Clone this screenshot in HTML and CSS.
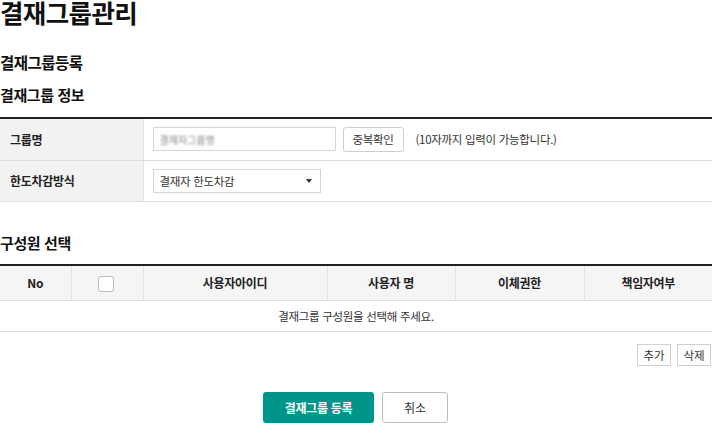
FILE: index.html
```html
<!DOCTYPE html>
<html lang="ko">
<head>
<meta charset="utf-8">
<link rel="stylesheet" href="styles.css">
</head>
<body>
<div class="page">
  <h1 class="title">결재그룹관리</h1>
  <h2 class="sub">결재그룹등록</h2>
  <h3 class="sec sec-info">결재그룹 정보</h3>
  <table class="form">
    <colgroup><col class="c-label"><col></colgroup>
    <tr class="r1">
      <th>그룹명</th>
      <td>
        <div class="field">
          <div class="input"><span class="blur">결재자그룹명</span></div>
          <button class="btn-sm">중복확인</button>
          <span class="hint">(10자까지 입력이 가능합니다.)</span>
        </div>
      </td>
    </tr>
    <tr class="r2">
      <th>한도차감방식</th>
      <td>
        <div class="select"><span>결재자 한도차감</span><span class="caret"></span></div>
      </td>
    </tr>
  </table>
  <h3 class="sec sec-mem">구성원 선택</h3>
  <table class="list">
    <colgroup>
      <col style="width:71px"><col style="width:72px"><col style="width:184px"><col style="width:128px"><col style="width:129px"><col>
    </colgroup>
    <thead>
      <tr>
        <th>No</th>
        <th><span class="chk"></span></th>
        <th>사용자아이디</th>
        <th>사용자 명</th>
        <th>이체권한</th>
        <th>책임자여부</th>
      </tr>
    </thead>
    <tbody>
      <tr><td colspan="6" class="empty">결재그룹 구성원을 선택해 주세요.</td></tr>
    </tbody>
  </table>
  <div class="tools">
    <button class="btn-xs">추가</button>
    <button class="btn-xs">삭제</button>
  </div>
  <div class="actions">
    <button class="btn-primary">결재그룹 등록</button>
    <button class="btn-cancel">취소</button>
  </div>
</div>
</body>
</html>
```
FILE: styles.css
```css
* { box-sizing: border-box; }
html, body { margin: 0; padding: 0; background: #fff; }
body {
  font-family: "Noto Sans CJK KR", "Noto Sans", sans-serif;
  color: #222;
  width: 712px;
  height: 423px;
  overflow: hidden;
}
.page { width: 712px; }
.title {
  margin: 0;
  font-size: 25.5px;
  line-height: 24px;
  font-weight: 700;
  color: #111;
  letter-spacing: -0.6px;
}
.sub {
  margin: 28px 0 0 0;
  font-size: 15.5px;
  line-height: 20px;
  font-weight: 700;
  letter-spacing: -0.5px;
  color: #111;
}
.sec {
  font-size: 15px;
  line-height: 20px;
  font-weight: 700;
  letter-spacing: -0.4px;
  color: #111;
}
.sec-info { margin: 13px 0 0 0; }
.sec-mem { margin: 31px 0 0 0; }
table { border-collapse: collapse; width: 712px; table-layout: fixed; }
.form { margin-top: 12px; border-top: 2px solid #222; }
.c-label { width: 143px; }
.form th {
  background: #f2f2f2;
  text-align: left;
  font-size: 12px;
  font-weight: 700;
  padding: 0 0 0 10px;
  border-right: 1px solid #e2e2e2;
  border-bottom: 1px solid #dedede;
  letter-spacing: -0.3px;
}
.form td {
  padding: 0 0 0 9px;
  border-bottom: 1px solid #dedede;
}
.form .r1 th, .form .r1 td { height: 42px; }
.form .r2 th, .form .r2 td { height: 41px; }
.field { display: flex; align-items: center; }
.input {
  width: 183px;
  height: 24px;
  border: 1px solid #d5d5d5;
  background: #fff;
  display: flex;
  align-items: center;
  padding-left: 6px;
}
.blur {
  font-size: 10px;
  color: #888;
  filter: blur(1.3px);
}
.btn-sm {
  margin-left: 7px;
  height: 25px;
  width: 61px;
  border: 1px solid #cfcfcf;
  border-radius: 3px;
  background: #fff;
  font-family: inherit;
  font-size: 11.5px;
  color: #333;
  padding: 0;
  letter-spacing: -0.3px;
}
.hint {
  margin-left: 12px;
  font-size: 11.5px;
  color: #333;
  letter-spacing: -0.3px;
}
.select {
  width: 168px;
  height: 24px;
  border: 1px solid #d5d5d5;
  display: flex;
  align-items: center;
  justify-content: space-between;
  padding: 0 8px 0 6px;
  font-size: 11.5px;
  color: #333;
  letter-spacing: -0.3px;
}
.caret {
  width: 0; height: 0;
  border-left: 3px solid transparent;
  border-right: 3px solid transparent;
  border-top: 4px solid #333;
}
.list { margin-top: 11px; border-top: 2px solid #222; }
.list th {
  background: #f5f5f5;
  height: 36px;
  font-size: 12px;
  font-weight: 700;
  text-align: center;
  border-right: 1px solid #e2e2e2;
  border-bottom: 1px solid #dedede;
  padding: 0;
  letter-spacing: -0.3px;
}
.list th:last-child { border-right: 0; }
.chk {
  display: inline-block;
  width: 16px; height: 16px;
  border: 1px solid #bbb;
  border-radius: 3px;
  background: #fff;
  vertical-align: middle;
  margin-left: -2px;
}
.empty {
  height: 31px;
  text-align: center;
  font-size: 11.5px;
  color: #333;
  border-bottom: 1px solid #dedede;
  padding: 0;
  letter-spacing: -0.3px;
}
.tools {
  display: flex;
  justify-content: flex-end;
  gap: 6px;
  margin-top: 12px;
  padding-right: 1px;
}
.btn-xs {
  height: 22px;
  width: 34px;
  border: 1px solid #d0d0d0;
  background: #fff;
  font-family: inherit;
  font-size: 11.5px;
  color: #333;
  padding: 0;
}
.actions {
  display: flex;
  justify-content: center;
  gap: 8px;
  margin-top: 26px;
  padding-right: 1px;
}
.btn-primary {
  width: 111px;
  height: 31px;
  background: #00958a;
  border: 0;
  border-radius: 3px;
  color: #fff;
  font-family: inherit;
  font-weight: 700;
  font-size: 12px;
  padding: 0;
  letter-spacing: -0.3px;
}
.btn-cancel {
  width: 66px;
  height: 31px;
  background: #fff;
  border: 1px solid #bdbdbd;
  border-radius: 3px;
  color: #333;
  font-family: inherit;
  font-size: 12px;
  padding: 0;
}
```
